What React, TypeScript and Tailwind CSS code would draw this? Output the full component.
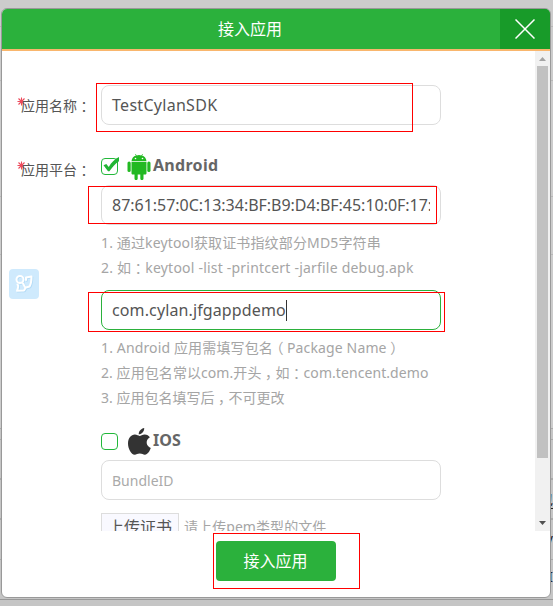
import type { ReactNode } from 'react';

const inputBase =
  'flex h-10 w-[340px] items-center rounded-lg border bg-white px-[10px] text-base text-[#555]';

/* Full-width punctuation centred in its em box. */
function P({ children }: { children: ReactNode }) {
  return (
    <span className="px-[3.5px] tracking-normal [font-feature-settings:'halt'] font-['Noto_Sans_CJK_SC',sans-serif]">
      {children}
    </span>
  );
}

function Label({ children }: { children: ReactNode }) {
  return (
    <div className="flex h-10 w-[84px] shrink-0 items-center pl-[15px] text-sm whitespace-nowrap text-[#555]">
      <svg className="-mt-[8px] -mr-[5px] h-[9px] w-[9px] shrink-0" viewBox="0 0 9 9" stroke="#ec4a5c" strokeWidth="1.1">
        <path d="M4.500 .5v8M.5 4.500h8M1.500 1.500l6 6M7.500 1.500l-6 6" />
      </svg>
      <span>{children}<P>：</P></span>
    </div>
  );
}

function Checkbox({ checked }: { checked?: boolean }) {
  return (
    <svg className="h-5 w-[18px] shrink-0 overflow-visible" viewBox="0 0 18 20">
      <rect x=".5" y="3.500" width="16" height="16" rx="3.500" fill="#fff" stroke="#22b83a" />
      {checked && (
        <path d="M2.500 10.300 5.300 9l2.500 3C10.200 7.500 13.500 4.200 18 2v4.200C14.200 8.800 11.200 12.200 8.400 16.300H7z" fill="#21b534" />
      )}
    </svg>
  );
}

function AndroidIcon() {
  return (
    <svg className="h-[26px] w-6 shrink-0" viewBox="0 0 24 26" fill="#22b922">
      <path d="M4.500 7.200C4.700 4.500 6.500 2.400 9 1.600L8 .2l.6-.2L9.700 1.400a8 8 0 0 1 4.600 0L15.400 0l.6.200-1 1.400c2.500.8 4.300 2.900 4.500 5.600z" />
      <path d="M4.500 8h15v11.200c0 .8-.6 1.300-1.300 1.300H16.500v4a1.500 1.500 0 0 1-3.200 0v-4h-2.600v4a1.500 1.500 0 0 1-3.200 0v-4H5.800c-.7 0-1.300-.5-1.300-1.300z" />
      <rect x=".5" y="7.500" width="3.200" height="10.500" rx="1.600" />
      <rect x="20.300" y="7.500" width="3.200" height="10.500" rx="1.600" />
      <circle cx="8.500" cy="4.500" r=".8" fill="#fff" />
      <circle cx="15.500" cy="4.500" r=".8" fill="#fff" />
    </svg>
  );
}

function AppleIcon() {
  return (
    <svg className="h-[27px] w-[23px] shrink-0" viewBox="0 0 23 27" fill="#333">
      <path d="M16.200 0c.3 3-2.300 6.400-5.500 6.300C10.500 3.300 13.200.4 16.200 0z" />
      <path d="M11.500 7.900c1.400 0 2.800-1.400 5.200-1.400 2.300 0 4.100 1.200 5.200 2.700-4.700 2.700-4.100 8.800.9 10.700-1 2.900-3.300 6.700-5.800 6.800-1.900.1-2.700-1.200-5.200-1.200s-3.200 1.100-5.100 1.200C3.200 26.700 0 20.600 0 15.500c0-5.300 3.100-8.900 6.900-8.900 2 0 3.600 1.300 4.600 1.300z" />
    </svg>
  );
}

function Hints({ children }: { children: ReactNode }) {
  return <ol className="pt-[5px] text-sm leading-[25px] whitespace-nowrap text-[#a5a5a5]">{children}</ol>;
}

/* The dimmed table of the page behind the dialog. */
function Backdrop() {
  return (
    <div className="absolute inset-0 flex flex-col bg-[#ccc] text-right text-sm text-[#222]">
      <div className="h-[26px]" />
      <div className="h-[54px] border-t border-[#b8b8b8]" />
      <div className="h-[116px] border-t border-[#b8b8b8]" />
      <div className="h-[58px] border-t border-[#b8b8b8]" />
      <div className="h-[174px] border-t border-[#b8b8b8]" />
      <div className="h-[11px] border-t border-[#aaa] bg-[#c5c5c5]" />
      <div className="h-[39px] border-t border-[#aaa] bg-[#c5c5c5]" />
      <div className="h-10 border-t-2 border-[#aaa] bg-[#c5c5c5] pt-[9px] underline underline-offset-4">包</div>
      <div className="h-[41px] border-t-2 border-[#aaa] bg-[#c5c5c5] pt-[9px]">y</div>
      <div className="h-10 border-t border-[#aaa] bg-[#c5c5c5] pt-[7px]">I</div>
      <div className="flex-1 border-t border-[#999] bg-[#c5c5c5]" />
    </div>
  );
}

export default function App() {
  return (
    <div className="relative h-[606px] w-[553px] overflow-hidden pt-2 pl-px font-['Noto_Sans','Noto_Sans_CJK_SC',sans-serif]">
      <Backdrop />
      <section className="relative flex h-[590px] w-[550px] flex-col overflow-hidden rounded-md border border-[#999] bg-white">
        <header className="flex h-[42px] shrink-0 border-b-2 border-[#f9b66d] bg-[#2bb13c]">
          <h1 className="flex-1 pr-[2px] text-center text-base leading-[41px] text-white">接入应用</h1>
          <button className="flex w-[50px] items-center justify-center bg-[#189b29]">
            <svg className="h-5 w-5" viewBox="0 0 20 20" stroke="#fff" strokeWidth="1.500">
              <path d="M.5.5l19 19M19.500.5l-19 19" />
            </svg>
          </button>
        </header>

        <div className="flex h-[480px] shrink-0 overflow-hidden">
          <main className="flex-1 overflow-hidden pt-[34px]">
            <div className="flex gap-[15px]">
              <Label>应用名称</Label>
              <div className={`${inputBase} border-[#ddd] tracking-[0.29px]`}>TestCylanSDK</div>
            </div>

            <div className="mt-5 flex gap-[15px]">
              <div className="flex w-[84px] shrink-0 flex-col">
                <div className="pt-[4px]"><Label>应用平台</Label></div>
                <div className="mt-[80px] ml-[7px] flex h-[30px] w-[30px] items-center justify-center rounded-[4px] bg-[#cfeafd]">
                  <svg className="h-5 w-5" viewBox="0 0 20 20" fill="none" strokeWidth="2" strokeLinejoin="round" strokeLinecap="round">
                    <g stroke="#b3dbf6" transform="translate(.8 .8)">
                      <circle cx="6" cy="5.500" r="3.500" />
                      <path d="M12 6V3.500L17.500 2.500Q17.500 9 15.500 12.500L12 13.500M3.500 10.500Q5 12 3 16.800L10 16.500 11.500 14 9 9.500" />
                    </g>
                    <g stroke="#fff">
                      <circle cx="6" cy="5.500" r="3.500" />
                      <path d="M12 6V3.500L17.500 2.500Q17.500 9 15.500 12.500L12 13.500M3.500 10.500Q5 12 3 16.800L10 16.500 11.500 14 9 9.500" />
                    </g>
                  </svg>
                </div>
              </div>

              <div className="w-[340px]">
                <div className="flex h-10 items-center">
                  <Checkbox checked />
                  <div className="ml-2 flex pt-[3px]"><AndroidIcon /></div>
                  <b className="ml-[2px] text-base tracking-[0.3px] text-[#666]">Android</b>
                </div>
                <div className={`${inputBase} border-[#ddd] tracking-[-0.02px]`}>
                  <span className="overflow-hidden whitespace-nowrap">87:61:57:0C:13:34:BF:B9:D4:BF:45:10:0F:17:</span>
                </div>
                <Hints>
                  <li className="tracking-[0.14px]">1. 通过keytool获取证书指纹部分MD5字符串</li>
                  <li className="tracking-[0.21px]">2. 如<P>：</P>keytool -list -printcert -jarfile debug.apk</li>
                </Hints>
                <div className={`${inputBase} mt-[10px] border-[#2bb13c] tracking-[0.12px]`}>
                  com.cylan.jfgappdemo
                  <span className="h-[21px] w-px bg-[#333]" />
                </div>
                <Hints>
                  <li className="tracking-[0.14px]">1. Android 应用需填写包名<P>（</P>Package Name<P>）</P></li>
                  <li className="tracking-[0.07px]">2. 应用包名常以com.开头<P>，</P>如<P>：</P>com.tencent.demo</li>
                  <li>3. 应用包名填写后<P>，</P>不可更改</li>
                </Hints>

                <div className="mt-[10px] flex h-10 items-center">
                  <Checkbox />
                  <div className="ml-2 flex w-6 justify-center pt-[2px]"><AppleIcon /></div>
                  <b className="ml-[2px] text-base text-[#666]">IOS</b>
                </div>
                <div className={`${inputBase} border-[#ddd]`}>
                  <span className="pt-px text-sm text-[#aaa]">BundleID</span>
                </div>
                <div className="mt-[13px] flex items-center text-sm whitespace-nowrap">
                  <button className="h-7 w-[78px] border border-[#ddd] bg-[#f9f9ff] text-base leading-6 text-[#555]">上传证书</button>
                  <span className="ml-[5px] tracking-[0.07px] text-[#a5a5a5]">请上传pem类型的文件</span>
                </div>
              </div>
            </div>
          </main>

          <div className="flex w-[15px] shrink-0 flex-col items-center bg-[#f1f1f1]">
            <svg className="h-[15px] w-[15px]" viewBox="0 0 15 15"><path d="M4 10h7L7.500 6z" fill="#a3a3a3" /></svg>
            <div className="h-[392px] w-[11px] bg-[#c1c1c1]" />
            <svg className="mt-auto h-[15px] w-[15px]" viewBox="0 0 15 15"><path d="M4 5h7L7.500 9z" fill="#505050" /></svg>
          </div>
        </div>

        <footer className="pt-[10px] pl-[214px]">
          <button className="block h-10 w-[120px] rounded-[4px] bg-[#2bb13c] pr-[1px] text-base leading-10 text-white">接入应用</button>
        </footer>
      </section>

      {/* Annotation boxes drawn over the dialog. */}
      <div className="absolute top-[83px] left-[96px] h-[49px] w-[317px] border border-[#f00]" />
      <div className="absolute top-[186px] left-[88px] h-[38px] w-[349px] border border-[#f00]" />
      <div className="absolute top-[292px] left-[88px] h-10 w-[357px] border border-[#f00]" />
      <div className="absolute top-[533px] left-[213px] h-14 w-[147px] border border-[#f00]" />
    </div>
  );
}
